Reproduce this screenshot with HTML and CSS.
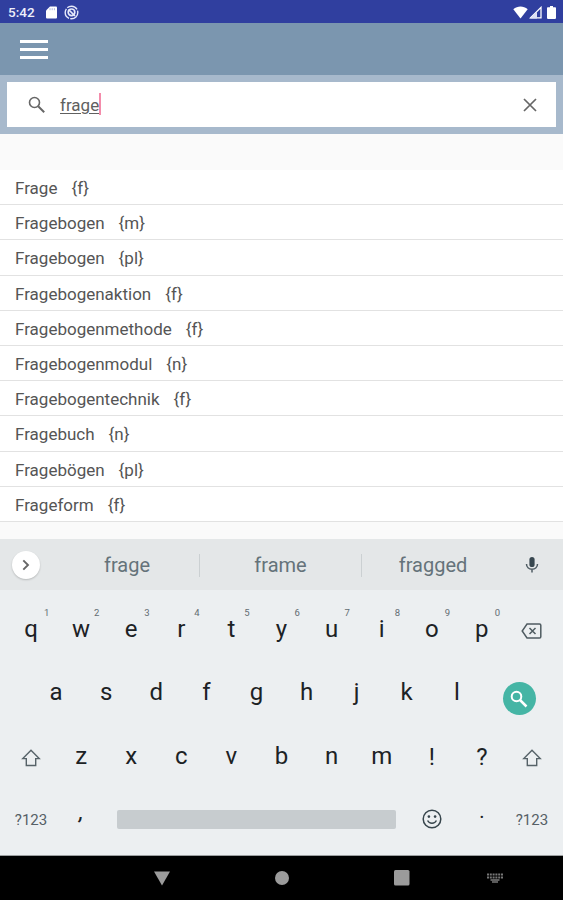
FILE: index.html
```
<!DOCTYPE html>
<html lang="de">
<head>
    <meta charset="UTF-8">
    <meta name="viewport" content="width=device-width, initial-scale=1.0">
    <title>Wörterbuch</title>
    <link rel="stylesheet" href="styles.css">
</head>
<body>
    <div class="status-bar">
        <span class="clock">5:42</span>
        <svg class="icon-sd" width="11" height="13" viewBox="0 0 11 13"><path d="M4 .5h6a1 1 0 0 1 1 1v10a1 1 0 0 1-1 1H1a1 1 0 0 1-1-1V4.500z" fill="#fff"/><path d="M4 2.200v2M6.200 2.200v2M8.400 2.200v2" stroke="#9aa3d8" stroke-width=".8"/></svg>
        <svg class="icon-sync" width="15" height="15" viewBox="0 0 15 15" fill="none" stroke="#e6e9fa"><circle cx="7.500" cy="7.500" r="6.300" stroke-width="1.400" stroke-dasharray="11 1.200"/><circle cx="7.500" cy="7.300" r="3.300" stroke-width="1.700"/><path d="M4.500 4.500l6.500 6.500" stroke-width="1.700"/></svg>
        <div class="status-right">
            <svg width="15" height="13" viewBox="0 0 15 13"><path d="M7.500 12.500L.3 3.200C4.500-.3 10.500-.3 14.700 3.200z" fill="#fff"/></svg>
            <svg width="13" height="13" viewBox="0 0 13 13"><path d="M1.600 11.800L12 1.400v10.400z" fill="none" stroke="#fff" stroke-width="1.300"/><path d="M1 12.400L8 5.500v6.900z" fill="#dde1f6"/></svg>
            <svg class="icon-battery" width="9" height="13" viewBox="0 0 9 13"><path d="M3 0h3v1.300h2.200a.8.8 0 0 1 .8.800v10a.8.8 0 0 1-.8.800H.8a.8.8 0 0 1-.8-.8v-10a.8.8 0 0 1 .8-.8H3z" fill="#fff"/></svg>
        </div>
    </div>

    <div class="toolbar">
        <div class="menu-button"><i></i><i></i><i></i></div>
    </div>

    <div class="search-wrap">
        <div class="search-box">
            <svg class="icon-search" width="18" height="18" viewBox="0 0 18 18" fill="none" stroke="#666"><circle cx="6.500" cy="6.500" r="5" stroke-width="1.600"/><path d="M10.200 10.200l6 6" stroke-width="2"/></svg>
            <span class="query">frage</span><span class="caret"></span>
            <svg class="icon-clear" width="14" height="14" viewBox="0 0 14 14"><path d="M1 1l12 12M13 1L1 13" stroke="#666" stroke-width="1.700"/></svg>
        </div>
    </div>

    <ul class="results">
        <li>Frage<span>{f}</span></li>
        <li>Fragebogen<span>{m}</span></li>
        <li>Fragebogen<span>{pl}</span></li>
        <li>Fragebogenaktion<span>{f}</span></li>
        <li>Fragebogenmethode<span>{f}</span></li>
        <li>Fragebogenmodul<span>{n}</span></li>
        <li>Fragebogentechnik<span>{f}</span></li>
        <li>Fragebuch<span>{n}</span></li>
        <li>Fragebögen<span>{pl}</span></li>
        <li>Frageform<span>{f}</span></li>
    </ul>

    <div class="keyboard">
        <div class="suggestions">
            <div class="expand">
                <svg width="8" height="12" viewBox="0 0 8 12"><path d="M1.300 1.300L6 6l-4.700 4.700" fill="none" stroke="#666" stroke-width="1.900"/></svg>
            </div>
            <div class="words">
                <span>frage</span>
                <span>frame</span>
                <span>fragged</span>
            </div>
            <svg class="icon-mic" width="14" height="18" viewBox="0 0 14 18"><rect x="4.400" y="1" width="5.200" height="10" rx="2.600" fill="#37474f"/><path d="M1.500 8c0 3 2.300 5.200 5.500 5.200S12.500 11 12.500 8M7 13v3.500" fill="none" stroke="#4f5c63" stroke-width="1.500"/></svg>
        </div>

        <div class="keys">
            <div class="row">
                <span class="key">q<sup>1</sup></span>
                <span class="key">w<sup>2</sup></span>
                <span class="key">e<sup>3</sup></span>
                <span class="key">r<sup>4</sup></span>
                <span class="key">t<sup>5</sup></span>
                <span class="key">y<sup>6</sup></span>
                <span class="key">u<sup>7</sup></span>
                <span class="key">i<sup>8</sup></span>
                <span class="key">o<sup>9</sup></span>
                <span class="key">p<sup>0</sup></span>
                <span class="key key-icon"><svg width="21" height="16" viewBox="0 0 21 16" fill="none" stroke="#4f5b61" stroke-width="1.500"><path d="M6 1h12.500a1.300 1.300 0 0 1 1.300 1.300v11.400a1.300 1.300 0 0 1-1.300 1.300H6L1.200 8z"/><path d="M8.500 5l6 6M14.500 5l-6 6"/></svg></span>
            </div>
            <div class="row row-middle">
                <span class="key">a</span>
                <span class="key">s</span>
                <span class="key">d</span>
                <span class="key">f</span>
                <span class="key">g</span>
                <span class="key">h</span>
                <span class="key">j</span>
                <span class="key">k</span>
                <span class="key">l</span>
                <span class="key-go">
                    <svg width="18" height="18" viewBox="0 0 18 18" fill="none" stroke="#fff"><circle cx="6.500" cy="6.500" r="4.800" stroke-width="2"/><path d="M10 10l6.500 6.500" stroke-width="2.500"/></svg>
                </span>
            </div>
            <div class="row">
                <span class="key key-icon"><svg width="20" height="18" viewBox="0 0 20 18"><path d="M10 1.300L1.800 9.600h3.500v6.900h9.400V9.600h3.500z" fill="none" stroke="#566268" stroke-width="1.400"/></svg></span>
                <span class="key">z</span>
                <span class="key">x</span>
                <span class="key">c</span>
                <span class="key">v</span>
                <span class="key">b</span>
                <span class="key">n</span>
                <span class="key">m</span>
                <span class="key mark">!</span>
                <span class="key mark">?</span>
                <span class="key key-icon"><svg width="20" height="18" viewBox="0 0 20 18"><path d="M10 1.300L1.800 9.600h3.500v6.900h9.400V9.600h3.500z" fill="none" stroke="#566268" stroke-width="1.400"/></svg></span>
            </div>
            <div class="row row-bottom">
                <span class="key symbols">?123</span>
                <span class="key comma">,</span>
                <span class="space-bar"></span>
                <span class="key"><svg width="20" height="20" viewBox="0 0 20 20" fill="none" stroke="#37454c"><circle cx="10" cy="10" r="8.800" stroke-width="1.500"/><path d="M5.600 11.500c1.600 3.600 7.200 3.600 8.800 0" stroke-width="1.400"/><circle cx="6.900" cy="7.600" r="1.300" fill="#37454c" stroke="none"/><circle cx="13.100" cy="7.600" r="1.300" fill="#37454c" stroke="none"/></svg></span>
                <span class="key period">.</span>
                <span class="key symbols">?123</span>
            </div>
        </div>
    </div>

    <div class="nav-bar">
        <svg width="16" height="15" viewBox="0 0 16 15"><path d="M0 .5h16L8 14.500z" fill="#9b9b9b"/></svg>
        <svg width="14" height="14" viewBox="0 0 14 14"><circle cx="7" cy="7" r="7" fill="#9b9b9b"/></svg>
        <svg width="16" height="16" viewBox="0 0 16 16"><rect width="15.500" height="15.500" rx="1.500" fill="#9b9b9b"/></svg>
        <svg width="16" height="10" viewBox="0 0 16 10" stroke="#777" fill="none"><path d="M0 1.500h16M0 4.500h16" stroke-width="2" stroke-dasharray="2 .8"/><path d="M3.500 7h9" stroke-width="1.600"/><path d="M5 9h6" stroke-width="1.500"/></svg>
    </div>
</body>
</html>
```
FILE: styles.css
```
* {
    box-sizing: border-box;
}
body {
    margin: 0;
    height: 900px;
    display: flex;
    flex-direction: column;
    overflow: hidden;
    background-color: #fafafa;
    color: #555;
    font-family: Roboto, sans-serif;
}
svg {
    display: block;
    flex: none;
}

/* Top */
.status-bar {
    height: 23px;
    flex: none;
    display: flex;
    align-items: center;
    padding: 1px 7px 0 8px;
    background-color: #303f9f;
}
.clock {
    width: 38px;
    color: #eef0fb;
    font-size: 13.500px;
    font-weight: 500;
    line-height: 16px;
}
.icon-sync {
    margin-left: 7px;
}
.status-right {
    display: flex;
    gap: 1px;
    margin-left: auto;
}
.icon-battery {
    margin-left: 4px;
}
.toolbar {
    height: 52px;
    flex: none;
    padding: 17px 20px;
    background-color: #7b96af;
}
.menu-button {
    width: 28px;
    display: grid;
    gap: 5px;
}
.menu-button i {
    height: 3px;
    background-color: #fff;
}
.search-wrap {
    height: 59px;
    flex: none;
    padding: 7px;
    background-color: #a7b9cc;
}
.search-box {
    height: 45px;
    display: flex;
    align-items: center;
    padding: 0 19px 0 21px;
    background-color: #fff;
}
.query {
    margin-left: 14px;
    font-size: 17px;
    color: #606060;
    text-decoration: underline;
    text-decoration-thickness: 1px;
    text-underline-offset: 2px;
}
.caret {
    width: 2px;
    height: 22px;
    margin-bottom: 2px;
    background-color: #f48cab;
}
.icon-clear {
    margin-left: auto;
}

/* Word list */
.results {
    flex: none;
    list-style: none;
    margin: 36px 0 0;
    padding: 0;
    background-color: #fff;
}
.results li {
    height: 35.200px;
    padding: 0 15px;
    border-bottom: 1px solid #e2e2e2;
    font-size: 17px;
    line-height: 36.500px;
}
.results span {
    margin-left: 14px;
}

/* Keyboard */
.keyboard {
    height: 317px;
    flex: none;
    margin-top: auto;
    background-color: #eceff1;
    border-bottom: 1px solid #9c9fa0;
}
.suggestions {
    height: 51px;
    display: flex;
    align-items: center;
    padding: 0 24px 0 12px;
    background-color: #e4e7e8;
}
.expand {
    width: 28px;
    height: 28px;
    display: grid;
    place-items: center;
    border-radius: 50%;
    background-color: #fff;
    box-shadow: 0 1px 2px rgba(0, 0, 0, .2);
}
.words {
    flex: 1;
    display: grid;
    grid-template-columns: 144px 162px 1fr;
    margin: 2px 21px 0 15px;
}
.words span {
    line-height: 23px;
    border-left: 1px solid #cbd0d2;
    text-align: center;
    font-size: 20px;
    color: #65737a;
}
.words span:first-child {
    border-left: 0;
}
.keys {
    padding: 0 6px;
}
.row {
    height: 63.500px;
    display: grid;
    grid-template-columns: repeat(11, 1fr);
    align-items: center;
}
.row-middle {
    padding-left: 25px;
    grid-template-columns: repeat(9, 50.100px) 1fr;
}
.key {
    position: relative;
    display: flex;
    justify-content: center;
    padding-top: 14px;
    font-size: 24px;
    line-height: 28px;
    color: #1c2225;
}
.key sup {
    position: absolute;
    top: 6px;
    left: 38px;
    font-size: 9.500px;
    line-height: 11px;
    color: #626c71;
}
.key-icon {
    padding-top: 18px;
}
.mark {
    padding-top: 17px;
}
.key-go {
    width: 33px;
    height: 33px;
    display: grid;
    place-items: center;
    margin: 27px 0 0 21px;
    border-radius: 50%;
    background-color: #45b5a5;
}
.row-bottom {
    grid-template-columns: 50.100px 50.100px 1fr 50.100px 50.100px 50.100px;
}
.space-bar {
    height: 19px;
    margin: 14px 11px 0;
    border-radius: 2px;
    background-color: #c7cccf;
}
.symbols {
    padding-top: 15px;
    font-size: 15px;
    color: #566066;
}
.comma {
    padding-top: 0;
    font-size: 20px;
    font-style: italic;
    font-weight: 500;
}
.period {
    padding-top: 0;
    padding-bottom: 3px;
    font-size: 20px;
}
.nav-bar {
    height: 44px;
    flex: none;
    display: grid;
    grid-template-columns: 120px 120px 120px 66px;
    align-items: center;
    justify-items: center;
    padding-left: 102px;
    background-color: #000;
}
```
